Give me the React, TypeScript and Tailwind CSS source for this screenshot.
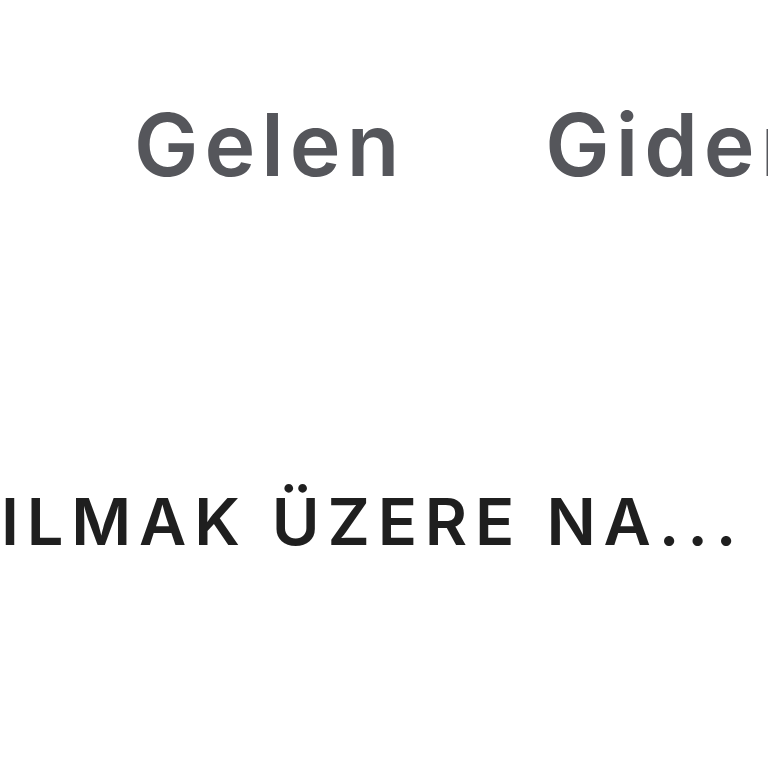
export default function App() {
  return (
    <div className="w-[768px] h-[768px] bg-white overflow-hidden relative" style={{ fontFamily: "Inter, 'Noto Sans', sans-serif" }}>
      <div className="flex pt-[95px] pl-[134px] gap-[140px] whitespace-nowrap">
        <span className="text-[86px] leading-[100px] font-semibold text-[#55565b] tracking-[6px]">Gelen</span>
        <span className="text-[86px] leading-[100px] font-semibold text-[#55565b] tracking-[6px]">Gider</span>
      </div>
      <div className="pt-[287px] pl-[1px] whitespace-nowrap">
        <span className="text-[65px] leading-[80px] font-semibold text-[#1f1f1f] tracking-[7.8px]">ILMAK ÜZERE NA...</span>
      </div>
    </div>
  );
}
